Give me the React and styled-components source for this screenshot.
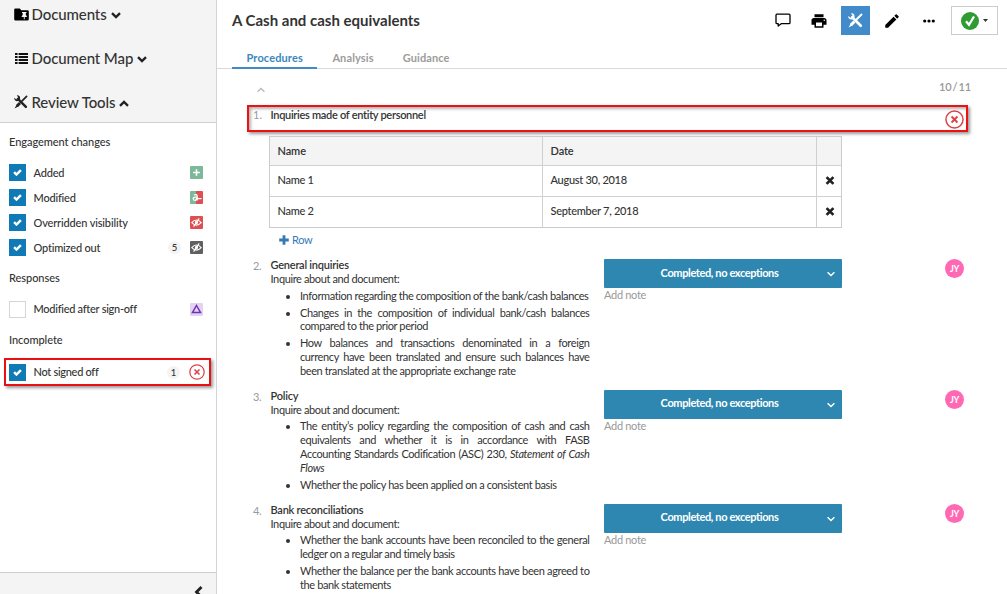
import React from 'react';
import styled, { createGlobalStyle } from 'styled-components';
import { MdEdit, MdPrint } from 'react-icons/md';

const Global = createGlobalStyle`
  * { box-sizing: border-box; }
  body { margin: 0; background: #fff; overflow: hidden; }
  #root { height: 594px; }
`;

const Page = styled.div`
  display: flex;
  width: 1007px;
  height: 594px;
  overflow: hidden;
  font-family: Lato, "Liberation Sans", sans-serif;
  font-size: 11px;
  line-height: 14px;
  color: #333;
`;

const Sidebar = styled.aside`
  display: flex;
  flex-direction: column;
  flex: none;
  width: 217px;
  border-right: 1px solid #d4d4d4;
`;

const SideNav = styled.nav`
  height: 123px;
  background: #f4f4f4;
  border-bottom: 1px solid #cfcfcf;
  padding-top: 2px;
`;

const NavItem = styled.div`
  display: flex;
  align-items: center;
  height: 24px;
  margin-bottom: 20px;
  padding-left: 14px;
  font-size: 15px;
  font-weight: 500;
  letter-spacing: -0.1px;
  white-space: nowrap;
`;

const NavIcon = styled.span`
  display: flex;
  width: 17.5px;
  padding-left: ${(p) => p.$inset || 0}px;
  color: #222;
`;

const NavChevron = styled.span`
  display: flex;
  margin-left: 4px;
  padding-top: 2px;
`;

const Filters = styled.div`
  flex: 1;
  padding: 9px 5px 0 4px;
`;

const FilterTitle = styled.h3`
  margin: ${(p) => p.$top || 0}px 0 ${(p) => p.$bottom}px 5px;
  height: 20px;
  line-height: 20px;
  font-size: 11px;
  font-weight: 500;
  letter-spacing: -0.05px;
`;

const FilterRow = styled.div`
  display: flex;
  align-items: center;
  height: ${(p) => (p.$marked ? 28 : 24.9)}px;
  padding: 0 8px 0 5px;
  font-weight: 500;
  ${(p) => p.$marked && `
    width: 207px;
    padding: 0 4px 0 3px;
    border: 2px solid #e81010;
    box-shadow: 2px 2px 3px rgba(0, 0, 0, 0.4);
  `}
`;

const Box = styled.span`
  display: flex;
  align-items: center;
  justify-content: center;
  width: 17px;
  height: 17px;
  margin-right: 7.5px;
  background: ${(p) => (p.$on ? '#0f7ab5' : '#fff')};
  border: 1px solid ${(p) => (p.$on ? '#0f7ab5' : '#d5d5d5')};
`;

const FilterLabel = styled.span`
  flex: 1;
  letter-spacing: ${(p) => p.$track}px;
  white-space: nowrap;
`;

const Count = styled.span`
  width: 13px;
  height: 13px;
  margin-right: 9px;
  border-radius: 50%;
  background: #f3f3f3;
  font-size: 9.5px;
  line-height: 13px;
  text-align: center;
`;

const Badge = styled.span`
  display: flex;
  align-items: center;
  justify-content: center;
  width: 13px;
  height: 13px;
  border-radius: 1px;
  color: #fff;
  background: ${(p) => p.$bg};
`;

const SideFooter = styled.div`
  display: flex;
  justify-content: flex-end;
  height: 22px;
  padding: 13px 13px 0 0;
  overflow: hidden;
  background: #f4f4f4;
  border-top: 1px solid #cfcfcf;

  svg { flex: none; }
`;

const Main = styled.main`
  flex: 1;
  display: flex;
  flex-direction: column;
  min-width: 0;
`;

const Header = styled.header`
  display: flex;
  flex: none;
  align-items: center;
  height: 41px;
  padding: 0 9px 0 15px;
`;

const Title = styled.h1`
  flex: 1;
  margin: 0 0 1px;
  font-size: 15px;
  line-height: 20px;
  font-weight: 700;
`;

const ToolButton = styled.span`
  display: flex;
  align-items: center;
  justify-content: center;
  width: 29px;
  height: 29px;
  margin-right: 7.6px;
  color: ${(p) => (p.$active ? '#fff' : '#000')};
  background: ${(p) => (p.$active ? '#428bca' : 'transparent')};
`;

const StatusButton = styled.span`
  display: flex;
  align-items: center;
  justify-content: center;
  gap: 4px;
  width: 47px;
  height: 29px;
  border: 1px solid #ccc;
`;

const Tabs = styled.nav`
  display: flex;
  flex: none;
  height: 28px;
  padding-left: 15px;
  border-bottom: 1px solid #d9d9d9;
`;

const Tab = styled.span`
  height: 28px;
  margin-right: ${(p) => (p.$active ? 15 : 29)}px;
  padding: ${(p) => (p.$active ? '0 14.5px' : '0')};
  line-height: 33px;
  font-weight: 700;
  letter-spacing: 0.12px;
  color: ${(p) => (p.$active ? '#3a87bd' : '#9c9c9c')};
  border-bottom: ${(p) => (p.$active ? '2px solid #428bca' : '0')};
`;

const Pager = styled.div`
  display: flex;
  flex: none;
  justify-content: space-between;
  height: 36px;
  padding: 11px 36px 0 40px;
  color: #999;
  font-weight: 600;
  word-spacing: -1.5px;
  letter-spacing: -0.15px;

  svg { margin-top: 7px; }
`;

const Marked = styled.div`
  display: flex;
  flex: none;
  width: 721px;
  height: 27px;
  margin-left: 30px;
  padding: 1px 2px 0 4px;
  border: 2px solid #ee1111;
  box-shadow: 2px 2px 3px rgba(0, 0, 0, 0.4), inset 2px 2px 3px rgba(0, 0, 0, 0.3);

  svg { margin-top: 2px; }
`;

const Num = styled.span`
  flex: none;
  width: 17.5px;
  color: #999;
`;

const Strong = styled.span`
  flex: 1;
  font-weight: 600;
  letter-spacing: -0.3px;
`;

const Table = styled.div`
  display: grid;
  flex: none;
  grid-template-columns: 273px 274px 24px;
  grid-template-rows: 29px 31px 30px;
  width: 573px;
  margin: 4px 0 0 52px;
  border: 1px solid #ccc;
`;

const Cell = styled.div`
  display: flex;
  align-items: center;
  padding: 0 0 ${(p) => (p.$head ? 0 : 2)}px 7.5px;
  background: ${(p) => (p.$head ? '#f4f4f4' : '#fff')};
  border-right: ${(p) => (p.$last ? 0 : 1)}px solid #d0d0d0;
  border-bottom: ${(p) => (p.$bottom ? 0 : 1)}px solid #d0d0d0;
  font-weight: ${(p) => (p.$head ? 600 : 500)};
  letter-spacing: ${(p) => (p.$head ? -0.1 : -0.28)}px;
`;

const AddRow = styled.div`
  display: flex;
  flex: none;
  align-items: center;
  gap: 3px;
  height: 23px;
  margin-bottom: 8px;
  padding-left: 62px;
  color: #337ab7;
  letter-spacing: -0.3px;
`;

const Item = styled.section`
  display: flex;
  flex: none;
  margin: 0 0 12px 36px;
  line-height: 13.8px;
  letter-spacing: -0.38px;
`;

const ItemBody = styled.div`
  width: 319px;
  margin: -0.6px 14.5px 0 0;
`;

const ItemTitle = styled.div`
  font-weight: 600;
  letter-spacing: -0.23px;
`;

const List = styled.ul`
  margin: 2.6px 0 0;
  padding-left: 29.5px;
  letter-spacing: -0.39px;
  text-align: justify;

  li + li { margin-top: 3.2px; }
`;

const Response = styled.div`
  width: 238px;
  color: #999;
  letter-spacing: -0.3px;
`;

const Select = styled.div`
  display: flex;
  align-items: center;
  height: 29px;
  padding: 0 7px 2px 8px;
  border-radius: 1px;
  background: #2e87b0;
  color: #fff;
  font-weight: 700;
  letter-spacing: -0.38px;

  span { flex: 1; text-align: center; }
  svg { margin-top: 3px; }
`;

const Avatar = styled.span`
  width: 19px;
  height: 19px;
  margin-left: 103px;
  border-radius: 50%;
  background: #ff69b4;
  color: #fff;
  font-size: 9px;
  font-weight: 700;
  line-height: 19px;
  text-align: center;
`;

const Tools = ({ size }) => (
  <svg width={size} height={size} viewBox="0 0 16 16" fill="none" stroke="currentColor">
    <path d="M4.5 4.5 13.6 13.6" strokeWidth="2.8" strokeLinecap="round" />
    <path d="M.4 3.2 2.6 5 4.8 2.8 3.2.4C5.5-.1 7.5 1.7 6.9 4.4L4.5 6.9C1.9 7.5-.2 5.5.4 3.2Z" fill="currentColor" stroke="none" />
    <path d="M14.4 1.6 9.3 6.7" strokeWidth="2" strokeLinecap="round" />
    <path d="M6.9 9.1 3.4 12.6" strokeWidth="3.2" />
    <path d="M3 11 5 13 .6 15.4Z" fill="currentColor" stroke="none" />
  </svg>
);

const Folder = () => (
  <svg width="15" height="13" viewBox="0 0 15 13">
    <path d="M1.5.5h4.3l1.5 1.7h6.2q1.3 0 1.3 1.3v7.7q0 1.3-1.3 1.3h-12q-1.3 0-1.3-1.3V1.8Q.2.5 1.5.5Z" fill="#000" />
    <path d="M8 4h4.5v.9h-.7v2.2l1 1v.9h-2.1v2.2h-.9V9H7.7v-.9l1-1V4.9H8Z" fill="#f4f4f4" />
  </svg>
);

const Rows = () => (
  <svg width="13" height="11" viewBox="0 0 13 11" fill="none" stroke="#111" strokeWidth="2">
    <path d="M0 1h2.6M0 4h2.6M0 7h2.6M0 10h2.6M3.6 1H13M3.6 4H13M3.6 7H13M3.6 10H13" />
  </svg>
);

const Chat = () => (
  <svg width="16" height="15" viewBox="0 0 16 15" fill="none" stroke="#000" strokeWidth="1.3">
    <path d="M2 1.2h12q1 0 1 1v7.5q0 1-1 1H6.2L3.2 13v-2.3H2q-1 0-1-1V2.2q0-1 1-1Z" strokeLinejoin="round" />
  </svg>
);

const CrossCircle = ({ size }) => (
  <svg width={size} height={size} viewBox="0 0 18 18" fill="none" stroke="#dc4347">
    <circle cx="9" cy="9" r="8.1" strokeWidth="1.4" />
    <path d="m6.2 6.2 5.6 5.6m0-5.6-5.6 5.6" strokeWidth="1.8" />
  </svg>
);

const Caret = ({ up, color }) => (
  <svg width="8" height="6" viewBox="0 0 8 6" fill="none" stroke={color} strokeWidth="1.4">
    <path d={up ? 'M.6 4.8 4 1.4l3.4 3.4' : 'M.6 1.2 4 4.6l3.4-3.4'} />
  </svg>
);

const Chevron = ({ up }) => (
  <svg width="10" height="7" viewBox="0 0 10 7" fill="none" stroke="#222" strokeWidth="2.4">
    <path d={up ? 'M1 5.8 5 2l4 3.8' : 'M1 1.2 5 5l4-3.8'} />
  </svg>
);

const Check = () => (
  <svg width="9" height="7" viewBox="0 0 10 8" fill="none" stroke="#fff" strokeWidth="2.8">
    <path d="M1.1 3.7 3.8 6.3 8.9 1.2" />
  </svg>
);

const Plus = ({ size, weight = 2.8 }) => (
  <svg width={size} height={size} viewBox="0 0 10 10" fill="none" stroke="currentColor" strokeWidth={weight}>
    <path d="M5 .2v9.6M.2 5h9.6" />
  </svg>
);

const Remove = () => (
  <svg width="10" height="9" viewBox="0 0 11 10" fill="none" stroke="#222" strokeWidth="3">
    <path d="m1.7 1.2 7.6 7.6m0-7.6L1.7 8.8" />
  </svg>
);

const HiddenEye = () => (
  <svg width="11" height="9" viewBox="0 0 11 9" fill="none" stroke="#fff">
    <path d="M.8 4.6Q5.5-.6 10.2 4.6 5.5 9.6.8 4.6Z" strokeWidth="1.1" />
    <circle cx="5.5" cy="4.5" r="1.1" strokeWidth="1.1" />
    <path d="M2.6 8.6 8.2.4" strokeWidth="1.1" />
  </svg>
);

const Filter = ({ label, on = true, count, marked, track = -0.2, children }) => (
  <FilterRow $marked={marked}>
    <Box $on={on}>{on && <Check />}</Box>
    <FilterLabel $track={track}>{label}</FilterLabel>
    {count && <Count>{count}</Count>}
    {children}
  </FilterRow>
);

const Procedure = ({ number, title, children }) => (
  <Item>
    <Num>{number}.</Num>
    <ItemBody>
      <ItemTitle>{title}</ItemTitle>
      <div>Inquire about and document:</div>
      <List>{children}</List>
    </ItemBody>
    <Response>
      <Select><span>Completed, no exceptions</span><Caret color="#fff" /></Select>
      Add note
    </Response>
    <Avatar>JY</Avatar>
  </Item>
);

export default function App() {
  return (
    <Page>
      <Global />
      <Sidebar>
        <SideNav>
          <NavItem><NavIcon><Folder /></NavIcon>Documents<NavChevron><Chevron /></NavChevron></NavItem>
          <NavItem><NavIcon $inset={1}><Rows /></NavIcon>Document Map<NavChevron><Chevron /></NavChevron></NavItem>
          <NavItem><NavIcon><Tools size={14} /></NavIcon>Review Tools<NavChevron><Chevron up /></NavChevron></NavItem>
        </SideNav>
        <Filters>
          <FilterTitle $bottom={8.5}>Engagement changes</FilterTitle>
          <Filter label="Added"><Badge $bg="#7cb899"><Plus size={7} weight={2.2} /></Badge></Filter>
          <Filter label="Modified">
            <Badge $bg="linear-gradient(90deg, #7cb899 50%, #dc4f52 50%)">
              <svg width="13" height="13" viewBox="0 0 13 13" fill="none" stroke="#fff" strokeWidth="1.3">
                <path d="M3.7 4Q7.2 2.6 7.2 5.4v4.2M7.2 6.1H5.4Q3.2 6.2 3.2 7.8 3.2 9.3 4.8 9.3q1.6 0 2.4-1.4M6 7.6h5.5" />
              </svg>
            </Badge>
          </Filter>
          <Filter label="Overridden visibility" track={-0.15}><Badge $bg="#dc4f52"><HiddenEye /></Badge></Filter>
          <Filter label="Optimized out" count="5"><Badge $bg="#606060"><HiddenEye /></Badge></Filter>
          <FilterTitle $top={8} $bottom={8.5}>Responses</FilterTitle>
          <Filter label="Modified after sign-off" on={false} track={-0.27}>
            <Badge $bg="#e2d3f3">
              <svg width="11" height="10" viewBox="0 0 11 10"><path d="M5.5 1.5 9.5 8.5h-8Z" fill="none" stroke="#7030b8" strokeWidth="1.5" /></svg>
            </Badge>
          </Filter>
          <FilterTitle $top={9} $bottom={8}>Incomplete</FilterTitle>
          <Filter label="Not signed off" count="1" marked track={-0.3}><CrossCircle size={16} /></Filter>
        </Filters>
        <SideFooter>
          <svg width="9" height="12" viewBox="0 0 9 12" fill="none" stroke="#222" strokeWidth="2.8"><path d="M7.5 1 2.5 6l5 5" /></svg>
        </SideFooter>
      </Sidebar>
      <Main>
        <Header>
          <Title>A Cash and cash equivalents</Title>
          <ToolButton><Chat /></ToolButton>
          <ToolButton><MdPrint size={18} /></ToolButton>
          <ToolButton $active><Tools size={15} /></ToolButton>
          <ToolButton><MdEdit size={18} /></ToolButton>
          <ToolButton>
            <svg width="12" height="4" viewBox="0 0 12 4"><circle cx="1.7" cy="2" r="1.6" /><circle cx="6" cy="2" r="1.6" /><circle cx="10.3" cy="2" r="1.6" /></svg>
          </ToolButton>
          <StatusButton>
            <svg width="18" height="18" viewBox="0 0 18 18"><circle cx="9" cy="9" r="9" fill="#2e9b33" /><path d="m5 9.2 3 3.6 5-8.3" fill="none" stroke="#fff" strokeWidth="2.3" /></svg>
            <svg width="5" height="3" viewBox="0 0 5 3"><path d="M0 0h5L2.5 3Z" fill="#333" /></svg>
          </StatusButton>
        </Header>
        <Tabs>
          <Tab $active>Procedures</Tab>
          <Tab>Analysis</Tab>
          <Tab>Guidance</Tab>
        </Tabs>
        <Pager>
          <Caret up color="#bbb" />
          <span>10 / 11</span>
        </Pager>
        <Marked>
          <Num>1.</Num>
          <Strong>Inquiries made of entity personnel</Strong>
          <CrossCircle size={19} />
        </Marked>
        <Table>
          <Cell $head>Name</Cell><Cell $head>Date</Cell><Cell $head $last />
          <Cell>Name 1</Cell><Cell>August 30, 2018</Cell><Cell $last><Remove /></Cell>
          <Cell $bottom>Name 2</Cell><Cell $bottom>September 7, 2018</Cell><Cell $bottom $last><Remove /></Cell>
        </Table>
        <AddRow><Plus size={10} />Row</AddRow>
        <Procedure number="2" title="General inquiries">
          <li>Information regarding the composition of the bank/cash balances</li>
          <li>Changes in the composition of individual bank/cash balances compared to the prior period</li>
          <li>How balances and transactions denominated in a foreign currency have been translated and ensure such balances have been translated at the appropriate exchange rate</li>
        </Procedure>
        <Procedure number="3" title="Policy">
          <li>The entity’s policy regarding the composition of cash and cash equivalents and whether it is in accordance with FASB Accounting&nbsp;Standards Codification (ASC) 230, <em>Statement of Cash Flows</em></li>
          <li>Whether the policy has been applied on a consistent basis</li>
        </Procedure>
        <Procedure number="4" title="Bank reconciliations">
          <li>Whether the bank accounts have been reconciled to the general ledger on a regular and timely basis</li>
          <li>Whether the balance per the bank accounts have been agreed to the bank statements</li>
        </Procedure>
      </Main>
    </Page>
  );
}
